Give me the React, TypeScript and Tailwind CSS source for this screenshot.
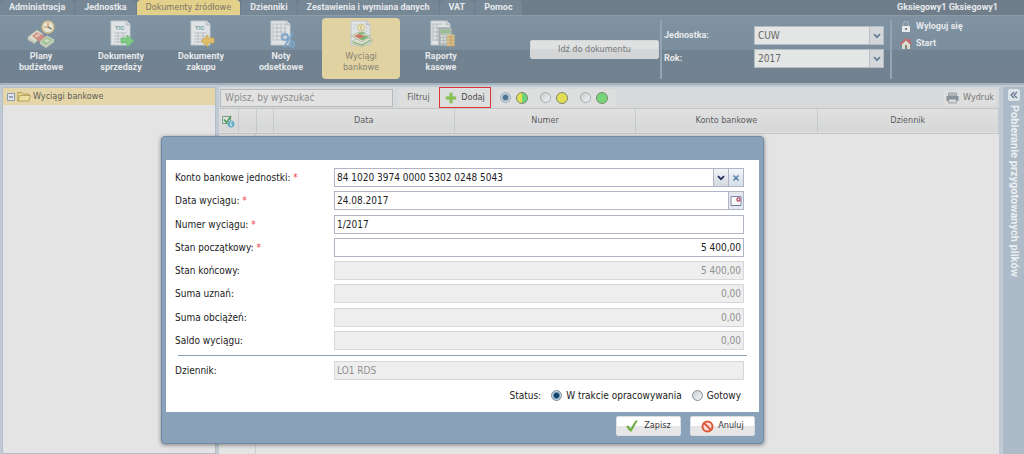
import { useState } from 'react'
import type { ReactNode } from 'react'
import clsx from 'clsx'

const tabs = ['Administracja', 'Jednostka', 'Dokumenty źródłowe', 'Dzienniki', 'Zestawienia i wymiana danych', 'VAT', 'Pomoc']

function Sheet() {
  return (
    <>
      <path d="M4 1h16l3 3v21H4z" fill="#e0e3e4" stroke="#c3c9cd" />
      <path d="M19 1v4h4" fill="#c5cbd0" stroke="#b0b8be" strokeWidth=".7" />
    </>
  )
}

function Invoice({ children }: { children: ReactNode }) {
  return (
    <svg viewBox="0 0 28 28" className="size-7" aria-hidden="true">
      <Sheet />
      <text x="8" y="9.500" fontSize="6" fill="#6fa5a5">TIC</text>
      <path d="M7 13h13M7 16h13M7 19h13M7 22h13M11 12v11M16 12v11" stroke="#b3b9be" strokeWidth=".8" />
      {children}
    </svg>
  )
}

function PlanIcon() {
  return (
    <svg viewBox="0 0 28 28" className="size-7" aria-hidden="true">
      <path d="M1 17l9-7 6 4-8 9-7-4z" fill="#dcdccc" stroke="#b5b8a8" strokeWidth=".7" />
      <path d="M5 16l5-4 11 6-7 5z" fill="#cb8d83" />
      <path d="M7 16l4-3 3 2-4 3z" fill="#e0b9ad" />
      <path d="M1 17l7 4v3l-7-4z" fill="#c9cbbd" />
      <path d="M13 22l7-6 7 4-8 6z" fill="#a5c69d" stroke="#d3dcc8" strokeWidth=".9" />
      <path d="M17 21l3-2 3 1.500-3 2z" fill="#d0d9c2" />
      <path d="M13 22l6 4v2l-6-4zM19 26l8-6v2l-8 6z" fill="#c8cfbc" />
      <circle cx="21" cy="7" r="6" fill="#e6e3d5" stroke="#c9b988" strokeWidth="1.500" />
      <path d="M21 2.500V7l-4 0" stroke="#c98b5d" strokeWidth="1.200" fill="none" />
      <path d="M21 7l3.500 2" stroke="#66655c" strokeWidth="1.200" />
    </svg>
  )
}

function SellIcon() {
  return (
    <Invoice>
      <path d="M14 18h6v-3l7 6-7 6v-4h-6z" fill="#7fcb85" stroke="#68b36f" strokeWidth=".7" />
    </Invoice>
  )
}

function BuyIcon() {
  return (
    <Invoice>
      <path d="M27 18h-6v-3l-7 6 7 6v-4h6z" fill="#dfbd6b" stroke="#c6a34f" strokeWidth=".7" />
    </Invoice>
  )
}

function InterestIcon() {
  return (
    <svg viewBox="0 0 28 28" className="size-7" aria-hidden="true">
      <Sheet />
      <path d="M6 4h12M6 8h14M6 12h14M6 16h14M6 20h10M6 4v16M10 4v16M14 4v16M18 4v16" stroke="#b3b9be" strokeWidth=".8" />
      <g fill="none" stroke="#7ea6cb" strokeWidth="2">
        <circle cx="18" cy="17" r="3" />
        <circle cx="25" cy="24" r="2.500" />
        <path d="M26 13l-9 14" />
      </g>
    </svg>
  )
}

function StatementIcon() {
  return (
    <svg viewBox="0 0 28 28" className="size-7" aria-hidden="true">
      <Sheet />
      <path d="M6 5h4M6 8h3M17 8h4M17 11h4" stroke="#bfc5c6" strokeWidth=".8" />
      <circle cx="14" cy="7.500" r="3.500" fill="#e8e2bd" stroke="#cfc287" />
      <path d="M14 5.500v4" stroke="#b3a772" />
      <path d="M5 21l9-4 11 2v3l-10 5-10-4z" fill="#dfe1d2" stroke="#a9b898" strokeWidth=".7" />
      <path d="M6 22l9 3 9-5" fill="none" stroke="#7fae78" strokeWidth="1.300" />
      <path d="M4 16l8-4 12 4-9 6z" fill="#d9dccb" stroke="#a9b898" strokeWidth=".7" />
      <path d="M7 16l5-2 8 2.500-6 3z" fill="#cf7566" />
      <path d="M12 19l6-3.500 4 1-6 4z" fill="#81b377" />
      <path d="M10 13.500l5-2 4 1.500-5 2z" fill="#8abb82" />
    </svg>
  )
}

function ReportIcon() {
  return (
    <svg viewBox="0 0 28 28" className="size-7" aria-hidden="true">
      <Sheet />
      <path d="M6 4h9M6 8h14M6 12h6M6 16h6M6 20h6M6 4v17M10 4v17" stroke="#a9b0b6" strokeWidth=".8" />
      <path d="M12 8h13v18H12z" fill="#b3bcb9" stroke="#8c9997" strokeWidth=".8" />
      <path d="M13.500 10h10v3h-10z" fill="#98bd8e" />
      <path d="M14 16h9M14 19h9M14 22h9" stroke="#e0e3e2" strokeWidth="1.600" strokeDasharray="2 1" />
      <path d="M20 14.500h7.500v11.500H20z" fill="#dcc48f" />
      <path d="M20 17h8M20 20h8M20 23h8M20 26h8M24 15v11" stroke="#b7995f" strokeWidth=".8" />
    </svg>
  )
}

const ribbon = [
  { lines: ['Plany', 'budżetowe'], icon: PlanIcon },
  { lines: ['Dokumenty', 'sprzedaży'], icon: SellIcon },
  { lines: ['Dokumenty', 'zakupu'], icon: BuyIcon },
  { lines: ['Noty', 'odsetkowe'], icon: InterestIcon },
  { lines: ['Wyciągi', 'bankowe'], icon: StatementIcon, active: true },
  { lines: ['Raporty', 'kasowe'], icon: ReportIcon },
]

function Chevron({ color }: { color: string }) {
  return (
    <svg viewBox="0 0 8 6" className="h-1.5 w-2" aria-hidden="true">
      <path d="M1 1.200l3 3 3-3" fill="none" stroke={color} strokeWidth="1.800" />
    </svg>
  )
}

function HeaderSelect({ id, label, value }: { id: string; label: string; value: string }) {
  return (
    <div className="flex items-center">
      <label htmlFor={id} className="w-[90px] font-bold">{label}</label>
      <div className="relative w-[130px]">
        <select
          id={id}
          className="block h-[19px] w-full appearance-none border border-[#b5bcc3] bg-[#e4e5e5] px-[3px] font-[DejaVu_Sans_Condensed,sans-serif] text-[10px] text-[#666]"
        >
          <option>{value}</option>
        </select>
        <span className="pointer-events-none absolute inset-y-px right-px flex w-[14px] items-center justify-center border-l border-[#b9bfc5] bg-[#d3d7da]">
          <Chevron color="#687f99" />
        </span>
      </div>
    </div>
  )
}

function Radio({ name, label, checked, onChange, dim }: { name: string; label: string; checked: boolean; onChange: () => void; dim?: boolean }) {
  return (
    <input
      type="radio"
      name={name}
      aria-label={label}
      checked={checked}
      onChange={onChange}
      className={clsx(
        'size-[11px] shrink-0 appearance-none rounded-full border bg-linear-to-br from-[#c9cdd0] to-[#f4f4f4]',
        dim ? 'border-[#a5abb0]' : 'border-[#838c94]',
        dim
          ? 'checked:bg-[radial-gradient(circle,#4f7390_0_2px,#cbd9e3_4px)]'
          : 'checked:bg-[radial-gradient(circle,#123f63_0_2px,#b9d5ea_4px)]',
      )}
    />
  )
}

function Header() {
  return (
    <header className="font-[Roboto,sans-serif] text-[9px] text-[#e6e9ec]">
      <div className="flex h-[15px] items-end justify-between bg-[#6f7d8a]">
        <nav className="flex gap-px">
          {tabs.map((tab) => (
            <a
              key={tab}
              href="#"
              className={clsx(
                'flex h-[15px] items-center rounded-t-sm px-[9px] whitespace-nowrap',
                tab === 'Dokumenty źródłowe'
                  ? 'bg-[#e3d08b] font-[DejaVu_Sans_Condensed,sans-serif] text-[#7b776a]'
                  : 'bg-[#768796] font-bold',
              )}
            >
              {tab}
            </a>
          ))}
        </nav>
        <span className="pr-[26px] leading-[15px] font-bold">Gksiegowy1 Gksiegowy1</span>
      </div>
      <div className="flex h-[68px] justify-between border-t border-[#8c9ca9] bg-[linear-gradient(#7f93a3_0,#7b8e9e_34px,#718290_34px,#728290_100%)]">
        <div className="flex pt-0.5 pl-px">
          {ribbon.map(({ lines, icon: Icon, active }) => (
            <button
              key={lines.join()}
              className={clsx(
                'mx-px flex h-[61px] w-[78px] flex-col items-center rounded-sm pt-0.5 leading-[11px]',
                active ? 'bg-[#e1d2a2] font-[DejaVu_Sans_Condensed,sans-serif] text-[#868275]' : 'font-bold',
              )}
            >
              <Icon />
              <span className="mt-[3px]">{lines[0]}</span>
              <span>{lines[1]}</span>
            </button>
          ))}
        </div>
        <div className="flex">
          <button className="mt-6 mr-px h-[19px] w-[129px] rounded-xs border border-[#d3d6d9] bg-linear-to-b from-[#dfe0e0] from-50% to-[#d3d5d6] to-50% font-[DejaVu_Sans_Condensed,sans-serif] text-[#74787b]">
            Idź do dokumentu
          </button>
          <div className="my-1 flex flex-col gap-1 border-l-2 border-[#95a4b0] pt-1.5 pl-0.5">
            <HeaderSelect id="unit" label="Jednostka:" value="CUW" />
            <HeaderSelect id="year" label="Rok:" value="2017" />
          </div>
          <div className="my-1 ml-1.5 flex w-[134px] flex-col gap-1 border-l-2 border-[#95a4b0] pl-2 font-bold">
            <a href="#" className="flex h-[13px] items-center gap-1">
              <svg viewBox="0 0 12 12" className="size-3" aria-hidden="true">
                <path d="M3.500 5V3a2.500 2.500 0 0 1 5 0v2" fill="none" stroke="#a7b3bc" strokeWidth="1.200" />
                <path d="M2 5h8v6H2z" fill="#e6e8e9" />
                <path d="M6 7v2" stroke="#5d6972" strokeWidth="1.500" />
              </svg>
              Wyloguj się
            </a>
            <a href="#" className="flex h-[13px] items-center gap-1">
              <svg viewBox="0 0 12 12" className="size-3" aria-hidden="true">
                <path d="M2 6l4-4 4 4v5H2z" fill="#dedccd" />
                <path d="M.5 6.500L6 1.200l5.500 5.300M9.500 1v3" fill="none" stroke="#c66a73" strokeWidth="1.600" />
                <path d="M5 7h2v4H5z" fill="#7a8a78" />
              </svg>
              Start
            </a>
          </div>
        </div>
      </div>
    </header>
  )
}

function Tree() {
  return (
    <aside className="w-[214px] shrink-0 border border-[#b3bec9] bg-[#e4e4e4]">
      <a href="#" className="flex h-[17px] items-center bg-[#e4d6a9] pl-1 text-[#5f5d56]">
        <svg viewBox="0 0 8 8" className="size-2" aria-hidden="true">
          <path d="M.5.5h7v7h-7z" fill="#e2e5e9" stroke="#8b9bb0" />
          <path d="M2 4h4" stroke="#4d5f7a" />
        </svg>
        <svg viewBox="0 0 14 11" className="mx-0.5 h-[11px] w-[14px]" aria-hidden="true">
          <path d="M.8 10V1.500h4l1 1.500h6v2" fill="#e6d58d" stroke="#a8934c" strokeWidth=".8" />
          <path d="M.8 10l2-5.500h10.600L12 10z" fill="#ecdf9f" stroke="#a8934c" strokeWidth=".8" />
        </svg>
        <span className="text-[9px]">Wyciągi bankowe</span>
      </a>
    </aside>
  )
}

const filters = [
  { label: 'Wszystkie', fill: 'bg-linear-to-r from-[#e3de55] from-50% to-[#6bd474] to-50%' },
  { label: 'W trakcie', fill: 'bg-[#e1de55]' },
  { label: 'Gotowe', fill: 'bg-[#74d579]' },
]

function Toolbar() {
  const [filter, setFilter] = useState('Wszystkie')

  return (
    <div className="flex h-[22px] items-center justify-between border-b border-[#c3c6c9] bg-[#d7d9db] pr-[3px] pl-px text-[9px] text-[#666]">
      <div className="flex items-center">
        <input
          aria-label="Wpisz, by wyszukać"
          placeholder="Wpisz, by wyszukać"
          className="h-[18px] w-[173px] border border-[#b4b9be] bg-[#e2e2e2] px-1 text-[10px] placeholder:text-[#8d8d8d]"
        />
        <button className="ml-[5px] h-[18px] w-[41px] bg-[#dcdddd]">Filtruj</button>
        <button className="flex h-[21px] w-[52px] items-center justify-center gap-1 border border-[#e03338] bg-[#dddede] text-[#4c4c4c]">
          <svg viewBox="0 0 12 12" className="size-3" aria-hidden="true">
            <path d="M4.500 1h3v3.500H11v3H7.500V11h-3V7.500H1v-3h3.500z" fill="#86c04f" stroke="#a4c985" strokeWidth=".7" />
          </svg>
          Dodaj
        </button>
        <div className="ml-1 flex h-[18px] items-center gap-3 bg-[#dddede] pr-2 pl-[5px]">
          {filters.map(({ label, fill }) => (
            <label key={label} className="flex items-center gap-[5px]">
              <Radio name="filter" label={label} checked={filter === label} onChange={() => setFilter(label)} dim />
              <span className={clsx('size-3 rounded-full border border-[#7d8a72]', fill)} />
            </label>
          ))}
        </div>
      </div>
      <button className="flex h-[16px] items-center gap-1 bg-[#dedede] px-0.5 text-[#777]">
        <svg viewBox="0 0 13 12" className="h-3 w-[13px]" aria-hidden="true">
          <path d="M2.500 1h8v3h-8z" fill="#b8bdc1" stroke="#858d94" strokeWidth=".7" />
          <path d="M.5 4h12v5H.5z" fill="#8a9299" />
          <path d="M2.500 7h8v4h-8z" fill="#d3d7da" stroke="#858d94" strokeWidth=".7" />
        </svg>
        Wydruk
      </button>
    </div>
  )
}

function StatementsGrid() {
  return (
    <table className="w-full table-fixed border-collapse text-[9px] text-[#5d5d5d]">
      <thead>
        <tr className="h-[24px] border-b border-[#c3c6c9] bg-linear-to-b from-[#e0e0e0] to-[#d6d7d8]">
          <th className="w-[19px] border-r border-[#c6c9cb]" aria-label="Zaznacz">
            <svg viewBox="0 0 14 14" className="mx-auto size-[14px]" aria-hidden="true">
              <path d="M1.500 2.500h8v7h-8z" fill="#dfe3df" stroke="#7d9c83" />
              <path d="M3 5.500l2.500 3L10 2" fill="none" stroke="#4f9a5d" strokeWidth="1.600" />
              <circle cx="10" cy="10" r="3.500" fill="#6dafc6" />
              <path d="M10 7.800v1M10 9.500v2.500" stroke="#e5f0f4" strokeWidth="1.200" />
            </svg>
          </th>
          <th className="w-[18px] border-r border-[#c6c9cb]" />
          <th className="w-[17px] border-r border-[#c6c9cb]" />
          {['Data', 'Numer', 'Konto bankowe', 'Dziennik'].map((column) => (
            <th key={column} className="border-r border-[#c6c9cb] font-normal">{column}</th>
          ))}
        </tr>
      </thead>
    </table>
  )
}

interface FieldProps {
  id: string
  label: string
  value: string
  required?: boolean
  disabled?: boolean
  right?: boolean
  children?: ReactNode
}

function Field({ id, label, value, required, disabled, right, children }: FieldProps) {
  return (
    <div className="flex items-center">
      <label htmlFor={id} className="w-[159px] shrink-0">
        {label}
        {required && <span className="text-[#f0444a]"> *</span>}
      </label>
      <div className={clsx('flex h-[19px] min-w-0 flex-1 border', disabled ? 'border-[#d5d7db] bg-[#eee]' : 'border-[#b1b4c5] bg-white')}>
        <input
          id={id}
          defaultValue={value}
          disabled={disabled}
          className={clsx('min-w-0 flex-1 px-0.5 disabled:text-[#909090]', right && 'text-right')}
        />
        {children}
      </div>
    </div>
  )
}

function StatementDialog() {
  const [status, setStatus] = useState('W trakcie opracowywania')

  return (
    <form
      role="dialog"
      aria-label="Wyciąg bankowy"
      className="absolute top-[136px] left-[161px] w-[603px] rounded-sm border border-[#6f8ba6] bg-[#8aa2b9] px-1 pt-[23px] pb-[7px] text-[10px] text-[#222] shadow-[0_1px_4px_rgba(0,0,0,0.45)]"
    >
      <div className="bg-white px-[9px] pt-2 pb-[9px]">
        <div className="flex h-[182px] flex-col justify-between pr-[6px]">
          <Field id="account" label="Konto bankowe jednostki:" value="84 1020 3974 0000 5302 0248 5043" required>
            <button type="button" aria-label="Rozwiń" className="flex w-[15px] items-center justify-center border-l border-[#b1b4c5] bg-linear-to-b from-[#f3f4f6] to-[#d3d8e0]">
              <Chevron color="#232f63" />
            </button>
            <button type="button" aria-label="Wyczyść" className="flex w-[15px] items-center justify-center border-l border-[#b1b4c5] bg-linear-to-b from-[#f0f5f9] to-[#d3dfe8]">
              <svg viewBox="0 0 8 8" className="size-2" aria-hidden="true">
                <path d="M1.500 1.500l5 5M6.500 1.500l-5 5" stroke="#587fa6" strokeWidth="1.600" />
              </svg>
            </button>
          </Field>
          <Field id="date" label="Data wyciągu:" value="24.08.2017" required>
            <button type="button" aria-label="Kalendarz" className="flex w-[15px] items-center justify-center border-l border-[#b1b4c5] bg-[#e6e8ef]">
              <svg viewBox="0 0 12 12" className="size-3" aria-hidden="true">
                <path d="M1 1.500h10v9H1z" fill="#fafafa" stroke="#7d88a8" />
                <path d="M1 10.500h10" stroke="#69749a" />
                <circle cx="8.500" cy="4.500" r="1.600" fill="#fff" stroke="#b03a56" strokeWidth="1.200" />
              </svg>
            </button>
          </Field>
          <Field id="number" label="Numer wyciągu:" value="1/2017" required />
          <Field id="opening" label="Stan początkowy:" value="5 400,00" required right />
          <Field id="closing" label="Stan końcowy:" value="5 400,00" disabled right />
          <Field id="credits" label="Suma uznań:" value="0,00" disabled right />
          <Field id="debits" label="Suma obciążeń:" value="0,00" disabled right />
          <Field id="balance" label="Saldo wyciągu:" value="0,00" disabled right />
        </div>
        <hr className="mx-[3px] my-[5px] border-[#8aa2b9]" />
        <div className="pr-[6px]">
          <Field id="journal" label="Dziennik:" value="LO1 RDS" disabled />
        </div>
        <div className="mt-2 flex items-center justify-end gap-2.5 pr-[9px]">
          <span>Status:</span>
          {['W trakcie opracowywania', 'Gotowy'].map((option) => (
            <label key={option} className="flex items-center gap-1">
              <Radio name="status" label={option} checked={status === option} onChange={() => setStatus(option)} />
              {option}
            </label>
          ))}
        </div>
      </div>
      <div className="flex justify-end gap-[9px] pt-1 pr-1 text-[9px] text-[#333]">
        <button type="button" className="flex h-[20px] w-[65px] items-center justify-center gap-1.5 rounded-xs border border-[#d9dfe5] bg-linear-to-b from-white from-50% to-[#e6e6e6] to-50%">
          <svg viewBox="0 0 12 12" className="size-3" aria-hidden="true">
            <path d="M0 6.500l2.500-1 2 3L9.500.5h2.300L5.500 11.500H4z" fill="#72b043" />
          </svg>
          Zapisz
        </button>
        <button type="button" className="flex h-[20px] w-[65px] items-center justify-center gap-1 rounded-xs border border-[#d9dfe5] bg-linear-to-b from-white from-50% to-[#e6e6e6] to-50%">
          <svg viewBox="0 0 13 13" className="size-[13px]" aria-hidden="true">
            <circle cx="6.500" cy="6.500" r="5" fill="#f8e0d8" stroke="#dc5a3c" strokeWidth="2" />
            <path d="M3 3l7 7" stroke="#dc5a3c" strokeWidth="2" />
          </svg>
          Anuluj
        </button>
      </div>
    </form>
  )
}

export default function App() {
  return (
    <div className="relative flex min-h-screen flex-col overflow-hidden bg-[#c0cad4] font-[DejaVu_Sans_Condensed,sans-serif]">
      <Header />
      <div className="flex flex-1 gap-[3px] border-t-2 border-[#a5b1bc] pt-0.5 pl-0.5">
        <Tree />
        <main className="mr-px flex min-w-0 flex-1 flex-col bg-[#e4e4e4]">
          <Toolbar />
          <StatementsGrid />
          <div className="ml-9 w-px flex-1 bg-[#cdd0d3]" />
        </main>
        <aside className="flex w-[21px] shrink-0 flex-col items-center border-l border-[#b0bdc9] bg-[#adbac7]">
          <button aria-label="Rozwiń panel" className="mt-0.5 flex size-3 shrink-0 items-center justify-center rounded-xs bg-[#dce3e9]">
            <svg viewBox="0 0 8 8" className="size-2" aria-hidden="true">
              <path d="M4 1L1 4l3 3M7 1L4 4l3 3" fill="none" stroke="#61758b" strokeWidth="1.200" />
            </svg>
          </button>
          <span className="mt-1 font-[Roboto,sans-serif] text-[11px] leading-[14px] font-bold whitespace-nowrap text-[#eceff1] [writing-mode:vertical-rl]">
            Pobieranie przygotowanych plików
          </span>
        </aside>
      </div>
      <StatementDialog />
    </div>
  )
}
